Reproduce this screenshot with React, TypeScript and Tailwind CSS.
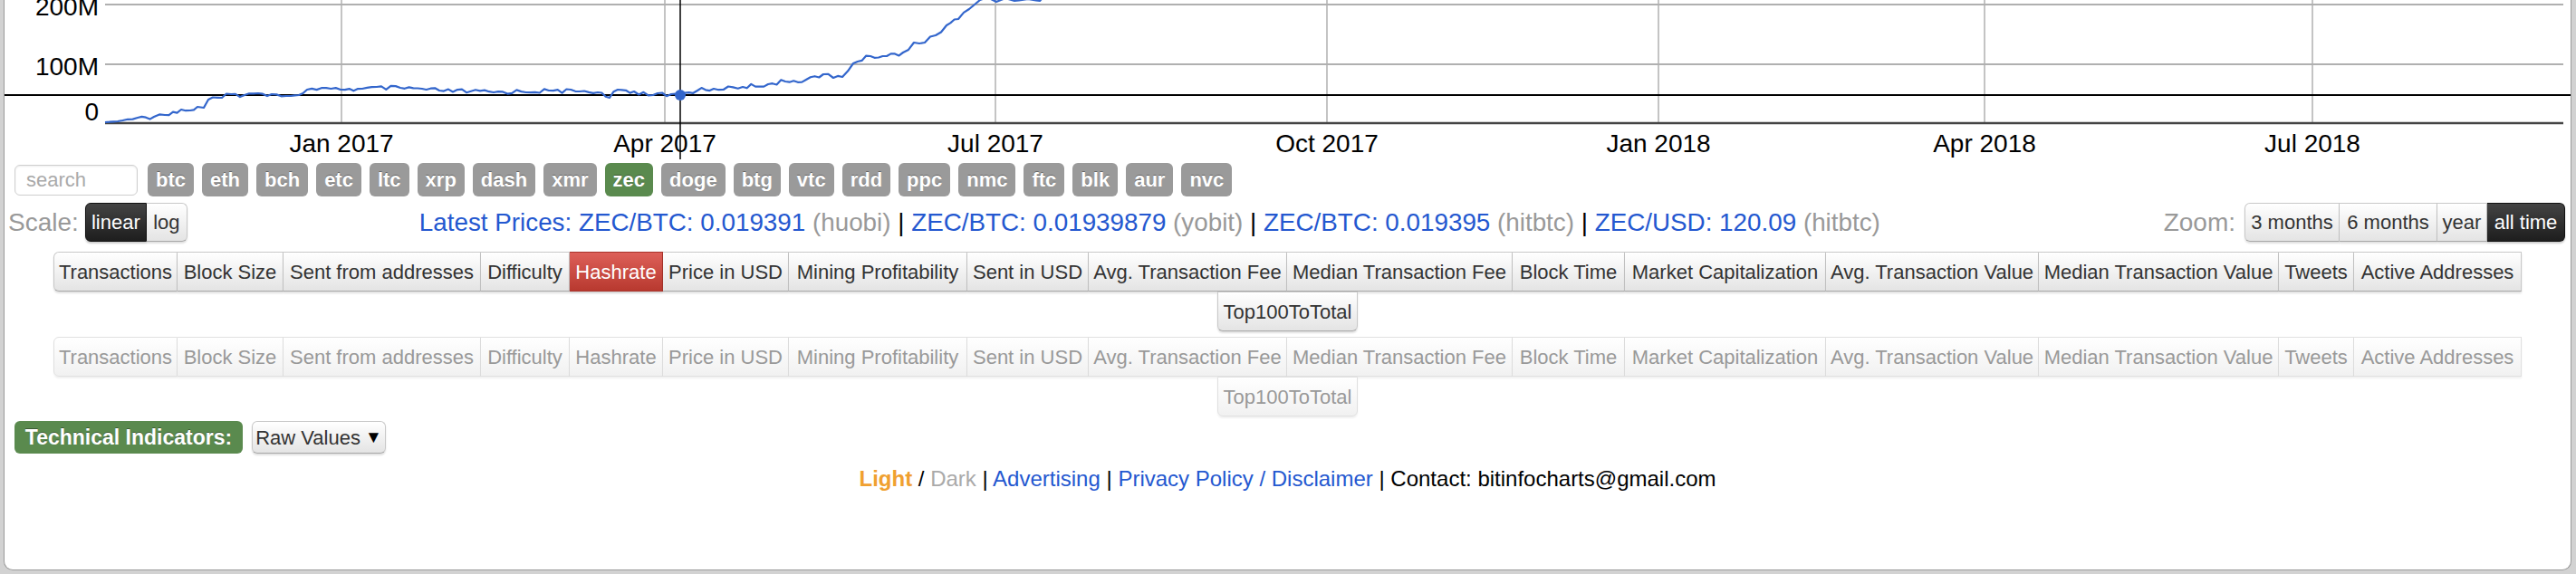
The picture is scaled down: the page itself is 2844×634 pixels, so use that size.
import React from 'react';

const coins = ['btc', 'eth', 'bch', 'etc', 'ltc', 'xrp', 'dash', 'xmr', 'zec', 'doge', 'btg', 'vtc', 'rdd', 'ppc', 'nmc', 'ftc', 'blk', 'aur', 'nvc'];

// [label, width in px]
const metrics: [string, number][] = [
  ['Transactions', 137],
  ['Block Size', 117],
  ['Sent from addresses', 218],
  ['Difficulty', 98],
  ['Hashrate', 103],
  ['Price in USD', 139],
  ['Mining Profitability', 197],
  ['Sent in USD', 134],
  ['Avg. Transaction Fee', 219],
  ['Median Transaction Fee', 249],
  ['Block Time', 124],
  ['Market Capitalization', 222],
  ['Avg. Transaction Value', 235],
  ['Median Transaction Value', 265],
  ['Tweets', 83],
  ['Active Addresses', 185],
  ['Top100ToTotal', 155],
];

const xLabels: [string, number][] = [
  ['Jan 2017', 377],
  ['Apr 2017', 734],
  ['Jul 2017', 1099],
  ['Oct 2017', 1465],
  ['Jan 2018', 1831],
  ['Apr 2018', 2191],
  ['Jul 2018', 2553],
];

const keyPoints: [number, number][] = [
  [116, 135], [130, 134], [152, 130], [170, 129], [182, 127], [200, 121], [210, 122], [218, 118],
  [225, 119], [230, 110], [245, 108], [255, 104], [270, 105], [285, 103], [300, 104], [321, 106],
  [330, 105], [339, 99], [376, 99], [400, 98], [442, 97], [485, 100], [545, 102], [606, 100],
  [640, 101], [660, 102], [673, 108], [682, 99], [700, 101], [721, 105], [751, 105], [770, 100],
  [788, 98], [820, 96], [848, 93], [867, 90], [890, 88], [909, 82], [920, 86], [930, 85],
  [942, 70], [961, 62], [979, 62], [997, 58], [1009, 47], [1021, 47], [1033, 39], [1045, 28],
  [1058, 21], [1070, 10], [1082, 0], [1090, -3], [1100, 2], [1110, -2], [1120, 1], [1135, -1],
  [1148, 1], [1160, -12], [1200, -40],
];

function buildLine() {
  const pts: string[] = [];
  let n = 0;
  for (let k = 0; k < keyPoints.length - 1; k++) {
    const [x1, y1] = keyPoints[k];
    const [x2, y2] = keyPoints[k + 1];
    const steps = Math.max(1, Math.round((x2 - x1) / 5));
    for (let s = 0; s < steps; s++) {
      const t = s / steps;
      const x = x1 + (x2 - x1) * t;
      let y = y1 + (y2 - y1) * t;
      if (x > 140 && x < 1070 && s > 0) {
        const r = Math.sin(n * 12.9898) * 43758.5453;
        y += (r - Math.floor(r)) * 5 - 2.5;
      }
      n++;
      pts.push(`${x.toFixed(1)},${y.toFixed(1)}`);
    }
  }
  const last = keyPoints[keyPoints.length - 1];
  pts.push(`${last[0]},${last[1]}`);
  return pts.join(' ');
}

function Chart() {
  return (
    <svg width={2833} height={176} viewBox="5 0 2833 176" className="block shrink-0">
      <line x1={116} y1={5} x2={2830} y2={5} stroke="#b0b0b0" strokeWidth={2} />
      <line x1={116} y1={71} x2={2830} y2={71} stroke="#b0b0b0" strokeWidth={2} />
      {xLabels.map(([l, x]) => (
        <line key={l} x1={x} y1={0} x2={x} y2={135} stroke="#b0b0b0" strokeWidth={1.5} />
      ))}
      <line x1={116} y1={136} x2={2830} y2={136} stroke="#444" strokeWidth={2.5} />
      <line x1={5} y1={105} x2={2838} y2={105} stroke="#000" strokeWidth={2} />
      <polyline points={buildLine()} fill="none" stroke="#3366cc" strokeWidth={2.2} strokeLinejoin="round" />
      <line x1={751} y1={0} x2={751} y2={176} stroke="#000" strokeWidth={1.5} />
      <circle cx={751} cy={105} r={6} fill="#3366cc" />
      <g fontFamily="'Liberation Sans', Arial, sans-serif" fontSize={28} fill="#000">
        <text x={109} y={17} textAnchor="end">200M</text>
        <text x={109} y={83} textAnchor="end">100M</text>
        <text x={109} y={133} textAnchor="end">0</text>
        {xLabels.map(([l, x]) => (
          <text key={l} x={x} y={168} textAnchor="middle">{l}</text>
        ))}
      </g>
    </svg>
  );
}

const plainBtn =
  'h-full flex items-center justify-center text-[22px] text-[#333] bg-linear-to-b from-white to-[#e4e4e4] border-y border-r border-[#c8c8c8] border-b-[#a8a8a8] shadow-[0_2px_2px_rgba(0,0,0,0.12)]';
const darkBtn =
  'h-full flex items-center justify-center text-[22px] text-white bg-linear-to-b from-[#444] to-[#1e1e1e] border-y border-r border-[#111] shadow-[0_2px_2px_rgba(0,0,0,0.2)]';

function MetricGroup({ faded }: { faded?: boolean }) {
  return (
    <div className="flex flex-wrap justify-center">
      {metrics.map(([label, w], i) => {
        const active = !faded && label === 'Hashrate';
        const last = i === metrics.length - 1;
        return (
          <div
            key={label}
            style={{ width: w }}
            className={[
              'h-[44px] flex items-center justify-center text-[22px] border-y border-r whitespace-nowrap',
              i === 0 ? 'border-l rounded-l-[6px]' : '',
              last ? 'border-l rounded-b-[6px]' : '',
              active
                ? 'text-white bg-linear-to-b from-[#dd5f58] to-[#b8392f] border-[#a8332b] shadow-[0_2px_2px_rgba(0,0,0,0.18)]'
                : faded
                  ? 'text-[#999] bg-linear-to-b from-white to-[#f1f1f1] border-[#e0e0e0] shadow-[0_2px_2px_rgba(0,0,0,0.06)]'
                  : 'text-[#333] bg-linear-to-b from-white to-[#e4e4e4] border-[#c8c8c8] border-b-[#a8a8a8] shadow-[0_2px_2px_rgba(0,0,0,0.12)]',
            ].join(' ')}
          >
            {label}
          </div>
        );
      })}
    </div>
  );
}

function Sep() {
  return <span className="text-black"> | </span>;
}

export default function App() {
  return (
    <div className="w-[2844px] h-[634px] bg-[#d2d2d2] overflow-hidden font-['Liberation_Sans',Arial,sans-serif]">
      <div className="ml-[4px] w-[2835px] h-[630px] bg-white border-x border-b border-[#9a9a9a] rounded-b-[10px] flex flex-col">
        <Chart />

        {/* coin selector */}
        <div className="mt-[4px] h-[37px] flex items-center gap-[9px] pl-[11px]">
          <input
            readOnly
            placeholder="search"
            className="w-[136px] h-[34px] mr-[2px] border border-[#cfcfcf] rounded-[6px] px-[12px] text-[22px] placeholder:text-[#aaa] shadow-[inset_0_1px_2px_rgba(0,0,0,0.08)] outline-none"
          />
          {coins.map((c) => (
            <span
              key={c}
              className={`h-[37px] px-[9px] flex items-center rounded-[6px] text-[22px] font-bold text-white [text-shadow:0_-1px_0_rgba(0,0,0,0.35)] ${
                c === 'zec' ? 'bg-[#5a8a4e]' : 'bg-[#9a9a9a]'
              }`}
            >
              {c}
            </span>
          ))}
        </div>

        {/* scale / prices / zoom */}
        <div className="mt-[7px] h-[43px] flex items-center pl-[4px] pr-[6px]">
          <span className="text-[28px] text-[#999]">Scale:</span>
          <div className="ml-[7px] h-full flex">
            <div className={`${darkBtn} w-[68px] border-l rounded-l-[6px]`}>linear</div>
            <div className={`${plainBtn} w-[45px] rounded-r-[6px]`}>log</div>
          </div>
          <div className="ml-[256px] text-[27.8px] whitespace-nowrap text-[#2458d0]">
            Latest Prices: ZEC/BTC: 0.019391 <span className="text-[#999]">(huobi)</span>
            <Sep />
            ZEC/BTC: 0.01939879 <span className="text-[#999]">(yobit)</span>
            <Sep />
            ZEC/BTC: 0.019395 <span className="text-[#999]">(hitbtc)</span>
            <Sep />
            ZEC/USD: 120.09 <span className="text-[#999]">(hitbtc)</span>
          </div>
          <span className="ml-auto text-[28px] text-[#999]">Zoom:</span>
          <div className="ml-[10px] h-full flex">
            <div className={`${plainBtn} w-[105px] border-l rounded-l-[6px]`}>3 months</div>
            <div className={`${plainBtn} w-[108px]`}>6 months</div>
            <div className={`${plainBtn} w-[55px]`}>year</div>
            <div className={`${darkBtn} w-[86px] rounded-r-[6px]`}>all time</div>
          </div>
        </div>

        {/* metric tabs */}
        <div className="mt-[11px]">
          <MetricGroup />
        </div>
        <div className="mt-[6px]">
          <MetricGroup faded />
        </div>

        {/* technical indicators */}
        <div className="mt-[5px] flex items-center gap-[10px] pl-[11px]">
          <span className="w-[252px] h-[36px] flex items-center justify-center rounded-[6px] bg-[#5a8a4e] text-white text-[23px] font-bold [text-shadow:0_-1px_0_rgba(0,0,0,0.35)]">
            Technical Indicators:
          </span>
          <div className={`${plainBtn} w-[148px] h-[44px] border-l rounded-[6px] gap-[5px]`}>
            Raw Values
            <span className="text-[19px] text-black">▼</span>
          </div>
        </div>

        {/* footer */}
        <div className="mt-[10px] text-center text-[24px] text-black whitespace-nowrap">
          <span className="font-bold text-[#f0a030]">Light</span> / <span className="text-[#aaa]">Dark</span>
          <Sep />
          <span className="text-[#2458d0]">Advertising</span>
          <Sep />
          <span className="text-[#2458d0]">Privacy Policy / Disclaimer</span>
          <Sep />
          Contact: bitinfocharts@gmail.com
        </div>
      </div>
    </div>
  );
}
